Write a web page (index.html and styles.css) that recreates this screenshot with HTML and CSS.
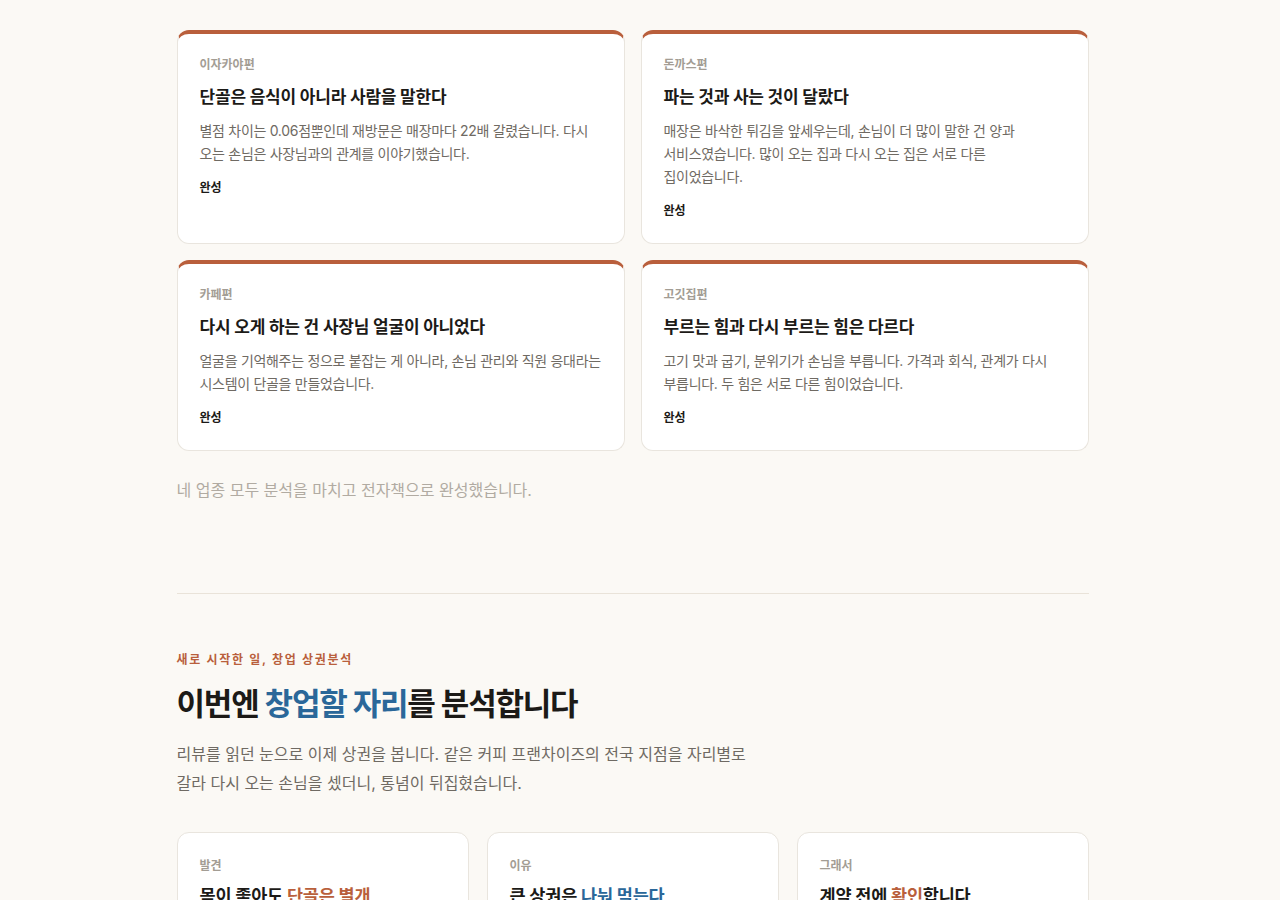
FILE: index.html
```html
<!DOCTYPE html>
<html lang="ko">
<head>
<meta charset="utf-8">
<title>단골 분석</title>
<link rel="stylesheet" href="styles.css">
</head>
<body>
<div class="page">
<main class="wrap">
  <section class="books">
    <div class="grid2">
      <article class="card card-accent">
        <p class="card-label">이자카야편</p>
        <h3 class="card-title">단골은 음식이 아니라 사람을 말한다</h3>
        <p class="card-desc">별점 차이는 0.06점뿐인데 재방문은 매장마다 22배 갈렸습니다. 다시 오는 손님은 사장님과의 관계를 이야기했습니다.</p>
        <p class="card-status">완성</p>
      </article>
      <article class="card card-accent">
        <p class="card-label">돈까스편</p>
        <h3 class="card-title">파는 것과 사는 것이 달랐다</h3>
        <p class="card-desc">매장은 바삭한 튀김을 앞세우는데, 손님이 더 많이 말한 건 양과 서비스였습니다. 많이 오는 집과 다시 오는 집은 서로 다른 집이었습니다.</p>
        <p class="card-status">완성</p>
      </article>
      <article class="card card-accent">
        <p class="card-label">카페편</p>
        <h3 class="card-title">다시 오게 하는 건 사장님 얼굴이 아니었다</h3>
        <p class="card-desc">얼굴을 기억해주는 정으로 붙잡는 게 아니라, 손님 관리와 직원 응대라는 시스템이 단골을 만들었습니다.</p>
        <p class="card-status">완성</p>
      </article>
      <article class="card card-accent">
        <p class="card-label">고깃집편</p>
        <h3 class="card-title">부르는 힘과 다시 부르는 힘은 다르다</h3>
        <p class="card-desc">고기 맛과 굽기, 분위기가 손님을 부릅니다. 가격과 회식, 관계가 다시 부릅니다. 두 힘은 서로 다른 힘이었습니다.</p>
        <p class="card-status">완성</p>
      </article>
    </div>
    <p class="books-note">네 업종 모두 분석을 마치고 전자책으로 완성했습니다.</p>
  </section>

  <hr class="divider">

  <section class="startup">
    <p class="eyebrow">새로 시작한 일, 창업 상권분석</p>
    <h2 class="headline">이번엔 <span class="blue">창업할 자리</span>를 분석합니다</h2>
    <p class="lead">리뷰를 읽던 눈으로 이제 상권을 봅니다. 같은 커피 프랜차이즈의 전국 지점을 자리별로 갈라 다시 오는 손님을 셌더니, 통념이 뒤집혔습니다.</p>
    <div class="grid3">
      <article class="card">
        <p class="card-label">발견</p>
        <h3 class="card-title lg">몸이 좋아도 <span class="terra">단골은 별개</span></h3>
        <p class="card-desc">유동인구가 많은 자리라고 다시 오는 손님이 많은 것은 아니었습니다.</p>
      </article>
      <article class="card">
        <p class="card-label">이유</p>
        <h3 class="card-title lg">큰 상권은 <span class="blue">나눠 먹는다</span></h3>
        <p class="card-desc">손님이 많은 곳에는 경쟁 매장도 많아, 단골이 여러 곳으로 흩어졌습니다.</p>
      </article>
      <article class="card">
        <p class="card-label">그래서</p>
        <h3 class="card-title lg">계약 전에 <span class="terra">확인</span>합니다</h3>
        <p class="card-desc">자리를 정하기 전에 그 상권의 재방문 구조부터 데이터로 확인합니다.</p>
      </article>
    </div>
  </section>

  <section class="tail">
    <p class="books-note">분석 결과는 순서대로 공개합니다.</p>
  </section>
</main>
</div>
</body>
</html>
```

FILE: styles.css
```css
* { box-sizing: border-box; }

html, body {
  margin: 0;
  padding: 0;
  background: #fbf9f5;
}

body {
  font-family: Inter, "Noto Sans CJK KR", "Noto Sans", sans-serif;
  color: #1c1a17;
  -webkit-font-smoothing: antialiased;
  word-break: keep-all;
}

.page {
  padding-right: 15px;
}

.wrap {
  max-width: 912px;
  margin: 0 auto;
  padding: 30px 0 0;
}

p, h2, h3 { margin: 0; }

.grid2 {
  display: grid;
  grid-template-columns: 1fr 1fr;
  gap: 16px;
}

.grid3 {
  display: grid;
  grid-template-columns: repeat(3, 1fr);
  gap: 18px;
  margin-top: 34px;
}

.card {
  background: #ffffff;
  border: 1px solid #e9e5de;
  border-radius: 12px;
  padding: 22px 22px 23px 22px;
  display: flex;
  flex-direction: column;
}

.card-accent {
  border-top: 4px solid #b95f3c;
}

.grid3 .card {
  padding-top: 24px;
}

.card-label {
  font-size: 12px;
  font-weight: 700;
  line-height: 18px;
  color: #a39d94;
}

.card-title {
  margin-top: 10px;
  font-size: 17px;
  font-weight: 700;
  line-height: 26px;
  color: #1c1a17;
  letter-spacing: -0.2px;
}

.card-title.lg {
  font-size: 17.5px;
  margin-top: 8px;
}

.card-desc {
  margin-top: 9px;
  font-size: 14px;
  line-height: 23px;
  letter-spacing: -0.3px;
  color: #6f6a63;
}

.card-status {
  margin-top: 14px;
  font-size: 12px;
  font-weight: 700;
  line-height: 18px;
  color: #1c1a17;
}

.books-note {
  margin-top: 26px;
  font-size: 16px;
  line-height: 26px;
  color: #b1aba2;
}

.divider {
  border: 0;
  border-top: 1px solid #e9e3d9;
  margin: 90px 0 0;
}

.startup {
  padding-top: 57px;
}

.eyebrow {
  font-size: 12px;
  font-weight: 700;
  line-height: 18px;
  letter-spacing: 1.7px;
  color: #b95f3c;
}

.headline {
  margin-top: 14px;
  font-size: 31px;
  font-weight: 700;
  line-height: 42px;
  letter-spacing: -1.2px;
  color: #1c1a17;
}

.blue { color: #2a6799; }
.terra { color: #b95f3c; }

.lead {
  margin-top: 15px;
  max-width: 580px;
  font-size: 16px;
  line-height: 29px;
  color: #6f6a63;
}

.tail {
  padding: 60px 0 900px;
}
```
